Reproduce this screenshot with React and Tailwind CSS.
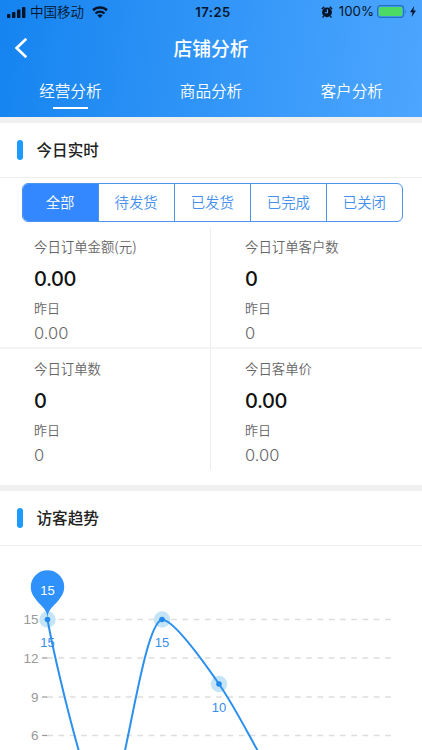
import React, { useState } from 'react';

const tabs = ['经营分析', '商品分析', '客户分析'];
const filters = ['全部', '待发货', '已发货', '已完成', '已关闭'];

const stats = [
  { label: '今日订单金额(元)', today: '0.00', yesterday: '0.00' },
  { label: '今日订单客户数', today: '0', yesterday: '0' },
  { label: '今日订单数', today: '0', yesterday: '0' },
  { label: '今日客单价', today: '0.00', yesterday: '0.00' },
];

// y positions of the horizontal grid lines
const gridLines = [
  { value: 15, y: 73.5 },
  { value: 12, y: 112 },
  { value: 9, y: 151 },
  { value: 6, y: 189.5 },
];

const points = [
  { value: 15, x: 47.5, y: 73.5 },
  { value: 15, x: 162, y: 73.5 },
  { value: 10, x: 219, y: 138 },
];

function StatusBar() {
  return (
    <div className="grid h-6 grid-cols-3 items-center pl-[7px] pr-[6px] text-[13px] leading-none text-[#06142a]">
      <div className="flex items-center">
        <svg className="h-[11px] w-[19px]" viewBox="0 0 19 11" fill="currentColor">
          <rect x="0" y="7" width="3.4" height="4" rx="0.8" />
          <rect x="5" y="5" width="3.4" height="6" rx="0.8" />
          <rect x="10" y="2.5" width="3.4" height="8.5" rx="0.8" />
          <rect x="15" y="0" width="3.4" height="11" rx="0.8" />
        </svg>
        <span className="ml-1 text-[13.5px]">中国移动</span>
        <svg className="ml-2 h-[12px] w-4" viewBox="0 0 16 12" fill="none" stroke="currentColor" strokeWidth="2.6">
          <path d="M1 4.3a10.2 10.2 0 0 1 14 0" />
          <path d="M3.5 7.5a6.5 6.5 0 0 1 9 0" strokeWidth="2.2" />
          <path d="M8 12 5.3 9.5a3.9 3.9 0 0 1 5.4 0z" fill="currentColor" stroke="none" />
        </svg>
      </div>
      <div className="pl-[3px] text-center font-['Inter'] text-[13px] font-semibold tracking-[0.5px]">17:25</div>
      <div className="flex items-center justify-end">
        <svg className="h-3 w-3" viewBox="0 0 12 12">
          <circle cx="6" cy="6.3" r="4.9" fill="currentColor" />
          <path d="M.8 3 3.3.8M11.2 3 8.7.8M2.6 10.2l-1 1.3M9.4 10.2l1 1.3" stroke="currentColor" strokeWidth="1.4" />
          <path d="M6.4 3.3v3.4H3.9" fill="none" stroke="#4ba3fe" strokeWidth="1.1" />
        </svg>
        <span className="ml-[6px] font-['Inter'] text-[13.3px] font-normal">100%</span>
        <svg className="ml-[3px] h-[13px] w-[30px]" viewBox="0 0 30 13">
          <rect x="0.6" y="0.6" width="26" height="11.8" rx="2.8" fill="none" stroke="#2671b8" strokeWidth="1.2" />
          <rect x="2" y="2" width="23.2" height="9" rx="1.4" fill="#4cd964" />
          <path d="M28 4.5q1.5 2 0 4z" fill="#2671b8" />
        </svg>
        <svg className="ml-[3px] h-[11px] w-[6px]" viewBox="0 0 6 11" fill="currentColor">
          <path d="M4.2 0 0 6.2h2.5L1.6 11 6 4.5H3.4z" />
        </svg>
      </div>
    </div>
  );
}

function SectionTitle({ children }) {
  return (
    <div className="flex h-[55px] items-center border-b border-[#ededed] pl-[17px]">
      <span className="h-5 w-[6px] rounded-[3px] bg-[#1c9bfd]" />
      <h2 className="ml-[13.5px] text-[15.6px] leading-none font-medium text-[#222]">{children}</h2>
    </div>
  );
}

function StatCell({ label, today, yesterday }) {
  return (
    <div className="pl-[34px] text-[#666]">
      <div className="pt-[9px] text-[13.4px] leading-5">{label}</div>
      <div className="mt-[9px] font-['Inter'] text-[20px] leading-7 font-medium tracking-[-0.45px] text-[#111]">{today}</div>
      <div className="mt-[5px] text-[13px] leading-5">昨日</div>
      <div className="mt-[3px] font-['Inter'] text-[16.5px] leading-6 text-[#666]">{yesterday}</div>
    </div>
  );
}

function VisitorChart() {
  return (
    <svg className="block h-[204px] w-[422px] font-['Liberation_Sans',sans-serif]" viewBox="0 0 422 204">
      {gridLines.map((line) => (
        <g key={line.value}>
          <text x="38.5" y={line.y + 4.7} textAnchor="end" fontSize="13.5" fill="#999">{line.value}</text>
          <path d={`M42 ${line.y}H47.5`} stroke="#999" strokeWidth="1.2" />
          <path d={`M47.3 ${line.y}H391`} stroke="#ddd" strokeWidth="1.6" strokeDasharray="5.63 5.63" />
        </g>
      ))}

      {points.map((p) => (
        <circle key={p.x} cx={p.x} cy={p.y} r="8.2" fill="#c5e4f5" />
      ))}
      <g fill="none" stroke="#2b90ee" strokeWidth="2">
        <path d="M47.5 73.5C53 104 67 164 80 209" />
        <path d="M124 209C135 159 148 77 162 73.5C173 74 199 109 219 138C234 160 245 182 259 207" />
      </g>
      {points.map((p) => (
        <g key={p.x}>
          <circle cx={p.x} cy={p.y} r="2.8" fill="#2389ec" />
          <text x={p.x} y={p.y + 27.5} textAnchor="middle" fontSize="13" fill="#398deb">{p.value}</text>
        </g>
      ))}

      {/* marker pin over the first point */}
      <path d="M47.5 72C47 62 40 60 34.5 51.5A16.7 16.7 0 1 1 60.5 51.5C55 60 48 62 47.5 72Z" fill="#2e91fc" />
      <text x="47.5" y="48.5" textAnchor="middle" fontSize="13" fill="#fff">15</text>
    </svg>
  );
}

export default function App() {
  const [activeTab, setActiveTab] = useState(0);
  const [activeFilter, setActiveFilter] = useState(0);

  return (
    <div className="h-[750px] w-[422px] overflow-hidden bg-white font-['Noto_Sans_CJK_SC',sans-serif] font-[350]">
      <header className="h-[117px] bg-linear-[97deg] from-[#1584f0] to-[#4da6ff] text-white">
        <StatusBar />
        <div className="grid h-12 grid-cols-3 items-center">
          <button className="pl-[14px]" aria-label="返回">
            <svg className="h-5 w-[14px]" viewBox="0 0 14 20" fill="none" stroke="currentColor" strokeWidth="2.7">
              <path d="M12.3.8 2.6 10l9.7 9.2" />
            </svg>
          </button>
          <h1 className="text-center text-[18.8px] leading-none font-medium">店铺分析</h1>
        </div>
        <nav className="grid h-[38px] grid-cols-3">
          {tabs.map((tab, index) => (
            <button
              key={tab}
              onClick={() => setActiveTab(index)}
              className="flex flex-col items-center pt-[7px] text-[15.6px] leading-[22px]"
            >
              {tab}
              {activeTab === index && <span className="mt-[6px] h-[2px] w-[35px] bg-white" />}
            </button>
          ))}
        </nav>
      </header>

      <section className="border-t-6 border-[#f0f0f1]">
        <SectionTitle>今日实时</SectionTitle>
        <div className="mt-[5px] mr-[19px] ml-[21.5px] flex h-[39px] overflow-hidden rounded-[6px] border border-[#4c94ee]">
          {filters.map((filter, index) => (
            <button
              key={filter}
              onClick={() => setActiveFilter(index)}
              className={`flex-1 border-[#4c94ee] text-[14.4px] leading-none not-last:border-r ${
                activeFilter === index ? 'bg-[#3388ff] text-white' : 'text-[#4590ee]'
              }`}
            >
              {filter}
            </button>
          ))}
        </div>

        <div className="mt-[5px] flex h-[258px] flex-col">
          {[0, 2].map((start) => (
            <div
              key={start}
              className={`grid h-[121.5px] grid-cols-2 divide-x divide-[#eee] ${start === 0 ? 'border-b-2 border-[#f3f3f3]' : ''}`}
            >
              {stats.slice(start, start + 2).map((item) => (
                <StatCell key={item.label} {...item} />
              ))}
            </div>
          ))}
        </div>
      </section>

      <section className="border-t-6 border-[#f0f0f1]">
        <SectionTitle>访客趋势</SectionTitle>
        <VisitorChart />
      </section>
    </div>
  );
}
